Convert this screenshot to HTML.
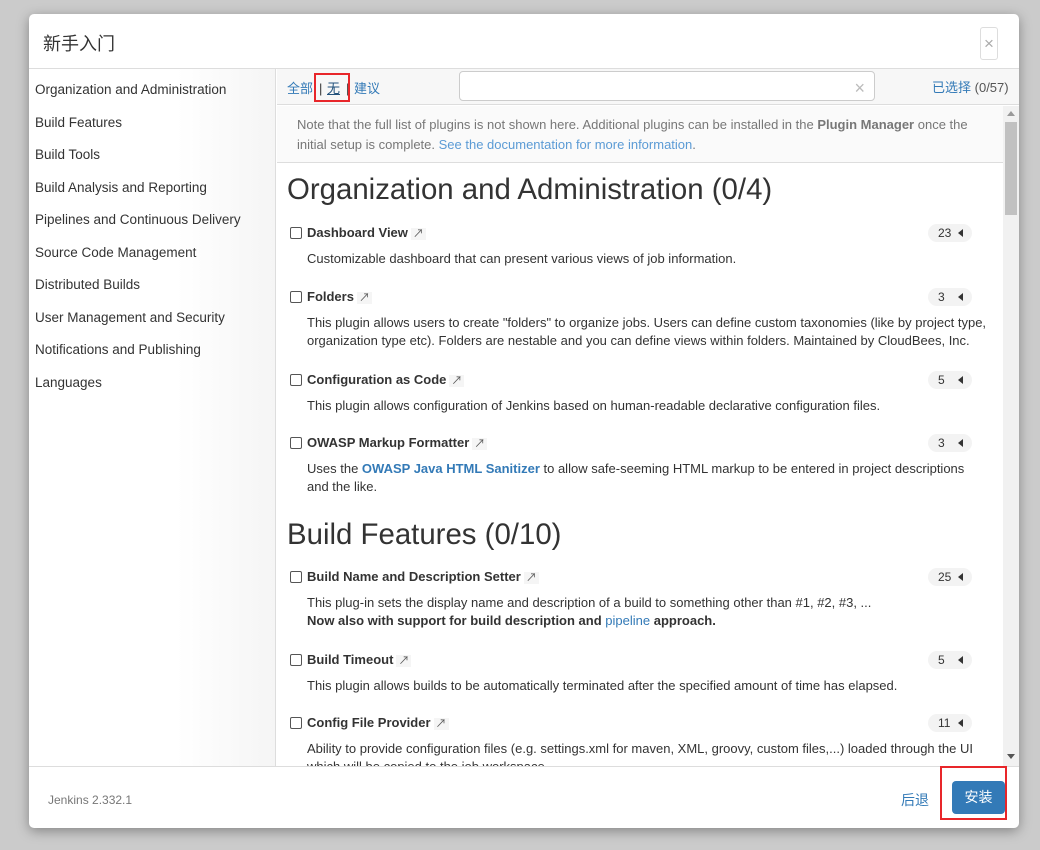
<!DOCTYPE html><html><head><meta charset="utf-8"><style>
*{margin:0;padding:0;box-sizing:border-box}
body{width:1040px;height:850px;background:#cbcbcb;font-family:"Liberation Sans","Noto Sans CJK SC",sans-serif;color:#333;position:relative;overflow:hidden;font-size:13px}
.dlg{position:absolute;left:29px;top:14px;width:990px;height:814px;background:#fff;border-radius:5px;box-shadow:0 3px 12px rgba(0,0,0,.35);overflow:hidden}
.a{position:absolute;white-space:nowrap}
.side div{position:absolute;left:6px;font-size:13.5px;color:#333}
.blue{color:#337ab7}
.t{font-weight:bold;font-size:13px}
.cb{position:absolute;width:12px;height:12px;border:1px solid #555;border-radius:2px;background:#fff}
.ar{font-size:11px;color:#555;background:#f5f5f5;padding:0 2px;margin-left:3px;font-weight:normal}
.bd{position:absolute;left:651px;height:18px;width:44px;background:#f3f3f3;border-radius:9px;font-size:12px;padding-left:10px;line-height:18px}
.bd:after{content:"";position:absolute;right:9px;top:5px;border-right:5px solid #333;border-top:4px solid transparent;border-bottom:4px solid transparent}
.d{position:absolute;left:30px;font-size:13px;line-height:18px;width:680px;white-space:normal}
h2{position:absolute;left:10px;font-size:29.4px;font-weight:normal;color:#333;white-space:nowrap}
</style></head><body>
<div class="dlg">
<div class="a" style="left:14px;top:16px;font-size:18px;color:#333">新手入门</div>
<div class="a" style="left:951px;top:13px;width:18px;height:33px;border:1px solid #ddd;border-radius:3px;color:#aaa;font-size:17px;text-align:center;line-height:31px">×</div>
<div class="a" style="left:0;top:54px;width:990px;height:1px;background:#ddd"></div>
<div class="a side" style="left:0;top:55px;width:247px;height:697px;background:linear-gradient(90deg,#fff 60%,#f5f5f5);border-right:1px solid #ddd">
<div style="top:13px">Organization and Administration</div>
<div style="top:46px">Build Features</div>
<div style="top:78px">Build Tools</div>
<div style="top:111px">Build Analysis and Reporting</div>
<div style="top:143px">Pipelines and Continuous Delivery</div>
<div style="top:176px">Source Code Management</div>
<div style="top:208px">Distributed Builds</div>
<div style="top:241px">User Management and Security</div>
<div style="top:273px">Notifications and Publishing</div>
<div style="top:306px">Languages</div>
</div>
<div class="a" style="left:248px;top:55px;width:742px;height:36px;background:#f7f7f7;border-bottom:1px solid #ddd"></div>
<div class="a blue" style="left:258px;top:64px;font-size:13px">全部</div>
<div class="a" style="left:290px;top:67px;font-size:13px">|</div>
<div class="a" style="left:298px;top:64px;font-size:13px;text-decoration:underline;color:#23527c">无</div>
<div class="a" style="left:317px;top:67px;font-size:13px">|</div>
<div class="a blue" style="left:325px;top:64px;font-size:13px">建议</div>
<div class="a" style="left:285px;top:59px;width:36px;height:29px;border:2px solid #e8262a"></div>
<div class="a" style="left:430px;top:57px;width:416px;height:30px;border:1px solid #ccc;border-radius:4px;background:#fff"><span style="position:absolute;right:9px;top:6px;color:#bbb;font-size:18px">×</span></div>
<div class="a" style="left:903px;top:63px"><span class="blue">已选择</span> <span style="color:#555">(0/57)</span></div>
<div class="a" style="left:248px;top:92px;width:726px;height:660px;overflow:hidden">
 <div class="a" style="left:0;top:0;width:726px;height:57px;background:#fafafa;border-bottom:1px solid #ddd"></div>
 <div class="a" style="left:20px;top:9px;color:#777;line-height:20px;white-space:normal;width:690px">Note that the full list of plugins is not shown here. Additional plugins can be installed in the <b>Plugin Manager</b> once the initial setup is complete. <span style="color:#5b9bd5">See the documentation for more information</span>.</div>
 <h2 style="top:67px">Organization and Administration (0/4)</h2>
 <div class="cb" style="left:13px;top:121px"></div><div class="a t" style="left:30px;top:119px">Dashboard View<span class="ar">↗</span></div><div class="bd" style="top:118px">23</div>
 <div class="d" style="top:144px">Customizable dashboard that can present various views of job information.</div>
 <div class="cb" style="left:13px;top:185px"></div><div class="a t" style="left:30px;top:183px">Folders<span class="ar">↗</span></div><div class="bd" style="top:182px">3</div>
 <div class="d" style="top:208px">This plugin allows users to create "folders" to organize jobs. Users can define custom taxonomies (like by project type, organization type etc). Folders are nestable and you can define views within folders. Maintained by CloudBees, Inc.</div>
 <div class="cb" style="left:13px;top:268px"></div><div class="a t" style="left:30px;top:266px">Configuration as Code<span class="ar">↗</span></div><div class="bd" style="top:265px">5</div>
 <div class="d" style="top:291px">This plugin allows configuration of Jenkins based on human-readable declarative configuration files.</div>
 <div class="cb" style="left:13px;top:331px"></div><div class="a t" style="left:30px;top:329px">OWASP Markup Formatter<span class="ar">↗</span></div><div class="bd" style="top:328px">3</div>
 <div class="d" style="top:354px">Uses the <b class="blue">OWASP Java HTML Sanitizer</b> to allow safe-seeming HTML markup to be entered in project descriptions and the like.</div>
 <h2 style="top:412px">Build Features (0/10)</h2>
 <div class="cb" style="left:13px;top:465px"></div><div class="a t" style="left:30px;top:463px">Build Name and Description Setter<span class="ar">↗</span></div><div class="bd" style="top:462px">25</div>
 <div class="d" style="top:488px">This plug-in sets the display name and description of a build to something other than #1, #2, #3, ...<br><b>Now also with support for build description and <span class="blue" style="font-weight:normal">pipeline</span> approach.</b></div>
 <div class="cb" style="left:13px;top:548px"></div><div class="a t" style="left:30px;top:546px">Build Timeout<span class="ar">↗</span></div><div class="bd" style="top:545px">5</div>
 <div class="d" style="top:571px">This plugin allows builds to be automatically terminated after the specified amount of time has elapsed.</div>
 <div class="cb" style="left:13px;top:611px"></div><div class="a t" style="left:30px;top:609px">Config File Provider<span class="ar">↗</span></div><div class="bd" style="top:608px">11</div>
 <div class="d" style="top:634px">Ability to provide configuration files (e.g. settings.xml for maven, XML, groovy, custom files,...) loaded through the UI which will be copied to the job workspace.</div>
</div>
<div class="a" style="left:974px;top:92px;width:16px;height:660px;background:#f1f1f1">
 <div class="a" style="left:2px;top:16px;width:12px;height:93px;background:#c1c1c1"></div>
 <div class="a" style="left:4px;top:5px;border-bottom:5px solid #999;border-left:4px solid transparent;border-right:4px solid transparent"></div>
 <div class="a" style="left:4px;top:648px;border-top:5px solid #555;border-left:4px solid transparent;border-right:4px solid transparent"></div>
</div>
<div class="a" style="left:0;top:752px;width:990px;height:1px;background:#ddd"></div>
<div class="a" style="left:19px;top:779px;color:#777;font-size:12px">Jenkins 2.332.1</div>
<div class="a blue" style="left:872px;top:776px;font-size:14px">后退</div>
<div class="a" style="left:923px;top:767px;width:53px;height:33px;background:#337ab7;border-radius:4px;color:#fff;font-size:14px;text-align:center;line-height:33px">安装</div>
<div class="a" style="left:911px;top:752px;width:67px;height:54px;border:2px solid #e8262a"></div>
</div>
</body></html>
